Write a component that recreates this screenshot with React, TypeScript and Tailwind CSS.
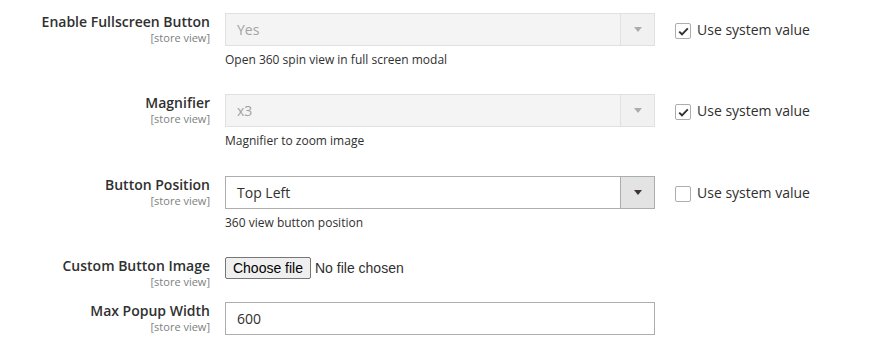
import React from 'react';

type SelectProps = {
  value: string;
  disabled?: boolean;
};

function SelectBox({ value, disabled }: SelectProps) {
  if (disabled) {
    return (
      <div className="flex h-[33px] w-[430px] border border-[#e0e0e0] bg-[#f4f4f4]">
        <div className="flex flex-1 items-center pl-[11px] text-[14px] text-[#a3a3a3]">{value}</div>
        <div className="flex w-[34px] items-center justify-center border-l border-[#e0e0e0] bg-[#f1f1f1]">
          <div className="h-0 w-0 border-x-[4px] border-t-[5px] border-x-transparent border-t-[#b0aba8]" />
        </div>
      </div>
    );
  }
  return (
    <div className="flex h-[33px] w-[430px] border border-[#adadad] bg-white">
      <div className="flex flex-1 items-center pl-[11px] text-[14px] text-[#303030]">{value}</div>
      <div className="flex w-[34px] items-center justify-center border-l border-[#adadad] bg-[#e3e3e3]">
        <div className="h-0 w-0 border-x-[4px] border-t-[5px] border-x-transparent border-t-[#41362f]" />
      </div>
    </div>
  );
}

function SystemValue({ checked }: { checked: boolean }) {
  return (
    <div className="ml-[20px] flex items-center gap-[6px] self-start pt-[10px]">
      <div className="flex h-[16px] w-[16px] items-center justify-center rounded-[2px] border border-[#adadad] bg-white">
        {checked && (
          <svg width="11" height="9" viewBox="0 0 11 9" fill="none">
            <path d="M1.2 4.6 L4 7.3 L9.8 1.4" stroke="#303030" strokeWidth="1.9" />
          </svg>
        )}
      </div>
      <span className="-mt-[2px] text-[14px] leading-[16px] text-[#303030]">Use system value</span>
    </div>
  );
}

function FieldLabel({ text }: { text: string }) {
  return (
    <div className="w-[210px] shrink-0 text-right">
      <div className="text-[14px] leading-[18px] font-semibold text-[#303030]">{text}</div>
      <div className="text-[11px] leading-[14px] text-[#808080]">[store view]</div>
    </div>
  );
}

function Note({ text }: { text: string }) {
  return <div className="mt-[5px] text-[12px] leading-[18px] text-[#303030]">{text}</div>;
}

export default function App() {
  return (
    <div className="h-[357px] w-[890px] overflow-hidden bg-white font-['Open_Sans',sans-serif]">
      <div className="flex flex-col pt-[13px]">
        <div className="flex items-start">
          <FieldLabel text="Enable Fullscreen Button" />
          <div className="ml-[15px] w-[430px]">
            <SelectBox value="Yes" disabled />
            <Note text="Open 360 spin view in full screen modal" />
          </div>
          <SystemValue checked />
        </div>

        <div className="mt-[25px] flex items-start">
          <FieldLabel text="Magnifier" />
          <div className="ml-[15px] w-[430px]">
            <SelectBox value="x3" disabled />
            <Note text="Magnifier to zoom image" />
          </div>
          <SystemValue checked />
        </div>

        <div className="mt-[26px] flex items-start">
          <FieldLabel text="Button Position" />
          <div className="ml-[15px] w-[430px]">
            <SelectBox value="Top Left" />
            <Note text="360 view button position" />
          </div>
          <SystemValue checked={false} />
        </div>

        <div className="mt-[25px] flex items-start">
          <FieldLabel text="Custom Button Image" />
          <div className="ml-[15px] flex w-[430px] items-start font-['Liberation_Sans',Arial,sans-serif] text-[14px]">
            <button className="h-[22px] w-[86px] rounded-[2px] border border-[#767676] bg-[#efefef] text-[14px] leading-[20px] text-black">
              Choose file
            </button>
            <span className="ml-[4px] leading-[22px] text-[#303030]">No file chosen</span>
          </div>
        </div>

        <div className="mt-[13px] flex items-start">
          <FieldLabel text="Max Popup Width" />
          <div className="ml-[15px] w-[430px]">
            <div className="flex h-[33px] w-[430px] items-center border border-[#adadad] bg-white pl-[11px] text-[14px] text-[#303030]">
              600
            </div>
          </div>
        </div>
      </div>
    </div>
  );
}
